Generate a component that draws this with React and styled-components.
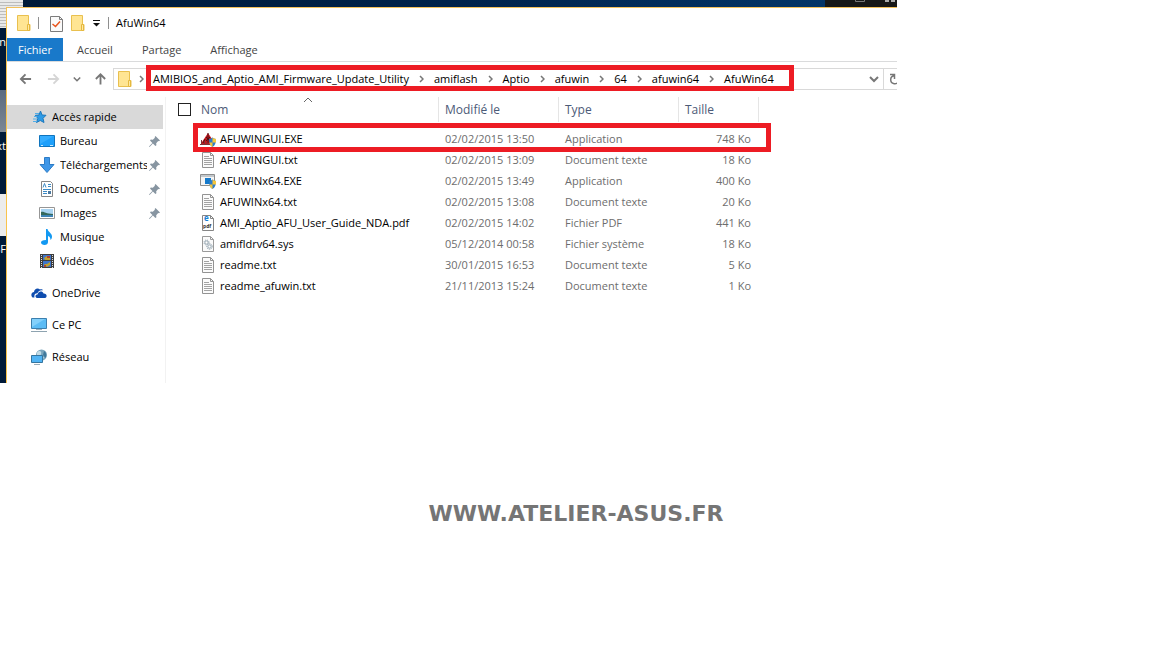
import React from "react";
import styled, { createGlobalStyle } from "styled-components";

const GlobalStyle = createGlobalStyle`
  * {
    box-sizing: border-box;
  }

  body {
    margin: 0;
    background: #fff;
    color: #000;
    font-family: "Open Sans", "Noto Sans", sans-serif;
    font-size: 11px;
    line-height: 16px;
  }

  button {
    padding: 0;
    border: 0;
    background: none;
    color: inherit;
    font: inherit;
  }

  a {
    color: inherit;
    text-decoration: none;
  }

  svg {
    display: block;
    flex: none;
  }
`;

const SDesktop = styled.div`
  position: relative;
  overflow: hidden;
  margin-right: 255px;
  padding: 7px 0 0 6px;
  background: linear-gradient(90deg, #001a38 0%, #00224a 50%, #04386c 100%);
`;

const SShortcut = styled.div`
  position: absolute;
  left: 0;
  top: ${props => props.$top}px;
  width: ${props => props.$width || 6}px;
  height: ${props => props.$height}px;
  background: ${props => props.$fill};
`;

const SShortcutName = styled.span`
  position: absolute;
  left: 0;
  top: ${props => props.$top}px;
  width: 6px;
  overflow: hidden;
  direction: rtl;
  color: #fff;
  white-space: nowrap;
`;

const SBackWindow = styled.div`
  position: absolute;
  top: 0;
  right: 0;
  width: 72px;
  height: 7px;
  background: #171717;

  > svg {
    position: absolute;
    top: 0;
    right: 0;
  }
`;

const SWindow = styled.div`
  position: relative;
  border-top: 1px solid #f3c15b;
  border-left: 1px solid #f9c34c;
  background: #fff;
`;

const STitleBar = styled.header`
  display: flex;
  align-items: center;
  height: 30px;
  padding-left: 10px;
`;

const SQuickAccess = styled.div`
  display: flex;
  align-items: center;
  gap: 7px;
  margin-right: 7px;
`;

const SQuickButtons = styled.div`
  display: flex;
  align-items: center;
  gap: 8px;
  padding-left: 4px;
`;

const SDivider = styled.span`
  width: 1px;
  height: 12px;
  background: #8f8f8f;
`;

const STitle = styled.h1`
  margin: 0;
  font-size: 11px;
  font-weight: 400;
`;

const STabs = styled.nav`
  display: flex;
  height: 24px;
  border-bottom: 1px solid #dadbdc;
`;

const STab = styled.button`
  padding: 0 ${props => (props.$active ? 11 : 14)}px;
  margin-right: ${props => (props.$active ? 0 : 1)}px;
  background: ${props => (props.$active ? "#1979ca" : "transparent")};
  color: ${props => (props.$active ? "#fff" : "#444")};
`;

const SNavBar = styled.div`
  display: flex;
  height: 35px;
  padding: 6px 0 7px 12px;
`;

const SNavButtons = styled.div`
  display: flex;
  align-items: center;
  gap: 13px;
  margin-right: 6px;
`;

const SForward = styled.button`
  margin-left: 2px;
`;

const SAddress = styled.div`
  display: flex;
  flex: 1;
  align-items: center;
  min-width: 0;
  padding-left: 4px;
  border: 1px solid #d9d9d9;
  border-right: 0;

  > button:nth-last-child(2) {
    margin-left: auto;
    padding-right: 4px;
  }
`;

const SRootCrumb = styled.div`
  display: flex;
  align-items: center;
  gap: 7px;
  margin-right: 2px;
`;

const SCrumbs = styled.ol`
  position: relative;
  display: flex;
  align-items: center;
  gap: 10px;
  height: 20px;
  margin: 0;
  padding: 0 20px 0 7px;
  list-style: none;
  white-space: nowrap;

  &::after {
    content: "";
    position: absolute;
    inset: -4px 0 -2px;
    border: 5px solid #ed1c24;
    pointer-events: none;
  }
`;

const SCrumb = styled.li`
  display: flex;
  align-items: center;
  gap: 10px;
`;

const SRefresh = styled.button`
  display: flex;
  align-items: center;
  width: 14px;
  height: 20px;
  padding-left: 5px;
  overflow: hidden;
  border-left: 1px solid #d9d9d9;
`;

const SBody = styled.div`
  display: flex;
`;

const SSidebar = styled.nav`
  width: 159px;
  padding: 8px 2px 14px 0;
  border-right: 1px solid #f2f2f2;
`;

const SPlace = styled.a`
  display: flex;
  align-items: center;
  gap: 5px;
  height: 24px;
  margin-top: ${props => (props.$root ? 8 : 0)}px;
  padding: 0 3px 0 ${props => (props.$nested ? 32 : 24)}px;
  background: ${props => (props.$active ? "#d9d9d9" : "transparent")};
`;

const SPlaceName = styled.span`
  flex: 1;
  overflow: hidden;
  white-space: nowrap;
`;

const SPin = styled.span`
  margin-left: -3px;
`;

const SFiles = styled.table`
  table-layout: fixed;
  width: 593px;
  height: min-content;
  border-collapse: collapse;
`;

const SHead = styled.th`
  position: relative;
  width: ${props => props.$width}px;
  padding: 0 0 6px;
  color: #4c5a77;
  font-size: 12px;
  font-weight: 400;
  text-align: left;

  > svg {
    position: absolute;
    top: 0;
    left: 105px;
  }
`;

const SHeadLabel = styled.div`
  height: 25px;
  padding-left: ${props => props.$indent || 6}px;
  border-right: 1px solid #e5e5e5;
  line-height: 25px;
`;

const SCheckbox = styled.input`
  display: block;
  width: 13px;
  height: 13px;
  margin: 6px 0 6px 12px;
  appearance: none;
  border: 1px solid #222;
  background: #fff;
`;

const SRow = styled.tr`
  position: relative;
  height: 21px;
`;

const SCell = styled.td`
  padding: 0 8px 0 6px;
  color: #6d6d6d;
  text-align: ${props => (props.$right ? "right" : "left")};
  white-space: nowrap;
`;

const SNameCell = styled.td`
  padding: 0 0 0 2px;
  white-space: nowrap;

  &::after {
    content: "";
    display: ${props => (props.$marked ? "block" : "none")};
    position: absolute;
    inset: -5px -12px -3px 27px;
    border: 5px solid #ed1c24;
    pointer-events: none;
  }
`;

const SFileName = styled.div`
  display: flex;
  align-items: center;
  gap: 4px;
`;

const SFooter = styled.footer`
  padding: 116px 0 100px;
  color: #757575;
  font-family: "DejaVu Sans", sans-serif;
  font-size: 22px;
  font-weight: 700;
  line-height: 30px;
  text-align: center;
`;

const Folder = () => (
  <svg width="14" height="17" viewBox="0 0 14 17">
    <path d="M.5.5h11v9h1.500v6H.5z" fill="#ffe38c" stroke="#e9c04f" />
    <path d="M1 1h10v14H1z" fill="#ffe593" />
    <path d="M10.500 9.500h2v6h-2z" fill="#ffe9a6" stroke="#e5b93e" />
  </svg>
);

const Properties = () => (
  <svg width="13" height="17" viewBox="0 0 13 17">
    <path d="M.5 1.500h9l3 3v12H.5z" fill="#fafafa" stroke="#7c7c7c" />
    <path d="M9.500 1.500v3h3" fill="none" stroke="#7c7c7c" />
    <path d="M2.500 9l3 2.500 4.500-5" fill="none" stroke="#e8541c" strokeWidth="1.500" />
  </svg>
);

const Customize = () => (
  <svg width="8" height="8" viewBox="0 0 8 8">
    <path d="M0 1.500h7" stroke="#111" />
    <path d="M0 4h7L3.500 7.500z" fill="#111" />
  </svg>
);

const Arrow = ({ turn = 0, color = "#777" }) => (
  <svg width="13" height="14" viewBox="0 0 14 14">
    <path
      d="M13 7H2M7 2L2 7l5 5"
      fill="none"
      stroke={color}
      strokeWidth="2"
      transform={`rotate(${turn} 7 7)`}
    />
  </svg>
);

const ChevronRight = () => (
  <svg width="5" height="8" viewBox="0 0 5 8">
    <path d="M1 1l3 3-3 3" fill="none" stroke="#777" strokeWidth="1.500" />
  </svg>
);

const ChevronDown = ({ width = 10 }) => (
  <svg width={width} height="7" viewBox="0 0 10 7">
    <path d="M1 1l4 4 4-4" fill="none" stroke="#777" strokeWidth="2" />
  </svg>
);

const SortUp = () => (
  <svg width="10" height="6" viewBox="0 0 10 6">
    <path d="M1 5l4-4 4 4" fill="none" stroke="#666" />
  </svg>
);

const Refresh = () => (
  <svg width="12" height="12" viewBox="0 0 12 12">
    <path d="M5 2.800A4 4 0 1 0 9.500 8M1 1.500h4.500V6" fill="none" stroke="#777" strokeWidth="1.500" />
  </svg>
);

const CaptionIcons = () => (
  <svg width="45" height="7" viewBox="0 0 45 7">
    <path d="M3.500 0v1.500h9V0" fill="none" stroke="#777" />
    <path d="M33 0h4v2h-4zM39 0h4v2h-4z" fill="#aaa" />
  </svg>
);

const Pin = () => (
  <svg width="11" height="11" viewBox="0 0 11 11">
    <path
      d="M6.500 0L11 4.500l-1 .8-.8-.2L7.200 7.200l.2 2-1 .8-2.500-2.400L.6 11 0 10.400l3.400-3.300L1 4.600l.8-1 2 .2 2.100-2-.2-.8z"
      fill="#8795a1"
    />
  </svg>
);

const placeIcons = {
  quick: (
    <>
      <path d="M9.500 2l1.500 4 4 .3-3 3 1 4.200-3.700-2-3.800 2 1.300-4.200-2.500-3L8 6z" fill="#2e9be6" stroke="#1c78bd" />
      <path d="M4 4.500h4M3 7.500h3M2 12.500h4M2 10h4" stroke="#51aee9" />
    </>
  ),
  desktop: (
    <>
      <path d="M.5 2.500h15v11H.5z" fill="#1ea0fb" stroke="#1074bd" />
      <path d="M1 3h14L1 11z" fill="#35adff" />
      <path d="M2 12.500h2M11 12.500h3" stroke="#c9ebff" />
    </>
  ),
  downloads: (
    <path d="M5.500.5h5v7h4.500L8 15.500 1 7.500h4.500z" fill="#3f97e8" stroke="#2c7cc6" />
  ),
  documents: (
    <>
      <path d="M2.500.5h9l2 2v13h-11z" fill="#fff" stroke="#858585" />
      <path d="M4 6.500l1.500-4 1.500 4M9 3.500h3M9 5.500h3M4 8.500h8M4 12.500h4M4 10.500h4" fill="none" stroke="#3b8ac6" />
      <path d="M9 10h3v3H9z" fill="#4b79a0" />
    </>
  ),
  pictures: (
    <>
      <path d="M.5 2.500h15v11H.5z" fill="#fff" stroke="#969696" />
      <path d="M2 4h12v8H2z" fill="#a8d3f1" />
      <path d="M2 7c3-1 4 2 12 2v1H2z" fill="#34685b" />
      <path d="M2 10h12v2H2z" fill="#3d83b5" />
    </>
  ),
  music: (
    <path
      d="M7 0h1.500c.5 3 4.500 4 4.500 7.500 0 1.500-.5 2.500-1.500 3.500 0-2.500-1-3.500-2.500-4v6c0 2-1.500 3-3.500 3S2 15 2 13.500 3.500 11 7 11z"
      fill="#1399f2"
    />
  ),
  videos: (
    <>
      <path d="M1 1h14v14H1z" fill="#3d3d3d" />
      <path d="M2.500 2v13M13.500 2v13" stroke="#ddd" strokeDasharray="1 1" />
      <path d="M4 2h8v5H4zM4 8h8v6H4z" fill="#3f75ca" />
      <path d="M5 5l3-2 3 2v2H6zM5 11h3l3-2v3l-3 2z" fill="#c1a12f" />
      <path d="M8 3h3v2H8zM5 12h2v2H5z" fill="#b3402e" />
    </>
  ),
  onedrive: (
    <>
      <path d="M1.500 12.500C-1 10 1 7 3 7c.3-3 3.500-4.500 6-2.500.8-.5 2.500-.5 3 .8-3.500-.5-5 1-5.500 3-3 0-3.500 2-3 4.200z" fill="#0e4cae" />
      <path d="M6 13c-2.300-.7-2-3.500.8-3.800C7.200 6 11.500 5.500 12.500 8.500c3-.3 4.500 3.500 1.500 4.500z" fill="#0e4cae" />
    </>
  ),
  computer: (
    <>
      <path d="M.5 1.500h15v10H.5z" fill="#5cbcf5" stroke="#3c7fae" />
      <path d="M1 2h13L1 10z" fill="#83d0fb" />
      <path d="M5 12.500h6" stroke="#9eb1bd" />
      <path d="M0 14.500h16" stroke="#8ea3b0" />
    </>
  ),
  network: (
    <>
      <circle cx="10.500" cy="6" r="5.500" fill="#7aa5bd" />
      <path d="M6 3.500C9 .5 11 3 10 5s2 2 3 4c-4 2-6 0-7-2z" fill="#c2dbe5" />
      <path d="M13 2c2 1 3 4 1.500 7L12 6z" fill="#3f789b" />
      <path d="M.5 6.500h11v7H.5z" fill="#51b4f4" stroke="#35759f" />
      <path d="M3 15.500h6" stroke="#9aacb7" />
    </>
  )
};

const Shield = () => (
  <>
    <path d="M9 8c1.500 0 2.500-.8 3.500-1.500C13.500 7.200 14.500 8 16 8c0 4-1 6.500-3.500 8C10 14.500 9 12 9 8z" fill="#2e7cc8" />
    <path d="M12.500 6.500c1 .7 2 1.500 3.500 1.500v3.500h-3.500zM9.400 11.500h3.100V16c-1.700-1-2.700-2.500-3.100-4.500z" fill="#f5c63b" />
  </>
);

const fileIcons = {
  gui: (
    <>
      <path d="M8 2l6 9v2H2v-2z" fill="#c5161d" />
      <path d="M8 2v10M6 6l4 4M10 6l-4 4M3 12l2-4" fill="none" stroke="#4f1517" />
      <path d="M0 13.500h10M1.500 9v4M4.500 10v4M7 11v3" stroke="#7d3236" />
      <Shield />
    </>
  ),
  exe: (
    <>
      <path d="M.5 1.500h14v11H.5z" fill="#f4f4f4" stroke="#8d8d8d" />
      <path d="M1 2h13v2H1z" fill="#c2c7cb" />
      <path d="M5 5h6v6H5z" fill="#1479cb" />
      <Shield />
    </>
  ),
  txt: (
    <>
      <path d="M2.500.5h8l3 3v12h-11z" fill="#fbfbfb" stroke="#939393" />
      <path d="M10.500.5v3h3" fill="none" stroke="#939393" />
      <path d="M4 4.500h5M4 6.500h8M4 8.500h8M4 10.500h8M4 12.500h8" stroke="#a3a3a3" />
    </>
  ),
  pdf: (
    <>
      <path d="M2.500.5h8l3 3v12h-11z" fill="#fff" stroke="#858585" />
      <path d="M10.500.5v3h3" fill="none" stroke="#858585" />
      <text x="4" y="6" fill="#1580d4" fontSize="8" fontWeight="700">e</text>
      <text x="3" y="13" fill="#333" fontSize="5" fontWeight="700">pdf</text>
    </>
  ),
  sys: (
    <>
      <path d="M2.500.5h8l3 3v12h-11z" fill="#fbfbfb" stroke="#9a9a9a" />
      <path d="M10.500.5v3h3" fill="none" stroke="#9a9a9a" />
      <circle cx="6.500" cy="6.500" r="2.500" fill="#dfe5e9" stroke="#93a3ad" strokeDasharray="1 1" />
      <circle cx="9.500" cy="10.500" r="2.800" fill="#dfe5e9" stroke="#93a3ad" strokeDasharray="1 1" />
      <circle cx="6.500" cy="6.500" r="1.500" fill="#fff" stroke="#a5b2bb" />
      <circle cx="9.500" cy="10.500" r="1.500" fill="#fff" stroke="#a5b2bb" />
    </>
  )
};

const Icon = ({ children }) => (
  <svg width="16" height="16" viewBox="0 0 16 16">
    {children}
  </svg>
);

const tabs = ["Fichier", "Accueil", "Partage", "Affichage"];

const path = [
  "AMIBIOS_and_Aptio_AMI_Firmware_Update_Utility",
  "amiflash",
  "Aptio",
  "afuwin",
  "64",
  "afuwin64",
  "AfuWin64"
];

const places = [
  { name: "Accès rapide", icon: "quick", active: true },
  { name: "Bureau", icon: "desktop", nested: true, pinned: true },
  { name: "Téléchargements", icon: "downloads", nested: true, pinned: true },
  { name: "Documents", icon: "documents", nested: true, pinned: true },
  { name: "Images", icon: "pictures", nested: true, pinned: true },
  { name: "Musique", icon: "music", nested: true },
  { name: "Vidéos", icon: "videos", nested: true },
  { name: "OneDrive", icon: "onedrive", root: true },
  { name: "Ce PC", icon: "computer", root: true },
  { name: "Réseau", icon: "network", root: true }
];

const files = [
  { name: "AFUWINGUI.EXE", date: "02/02/2015 13:50", type: "Application", size: "748 Ko", icon: "gui", marked: true },
  { name: "AFUWINGUI.txt", date: "02/02/2015 13:09", type: "Document texte", size: "18 Ko", icon: "txt" },
  { name: "AFUWINx64.EXE", date: "02/02/2015 13:49", type: "Application", size: "400 Ko", icon: "exe" },
  { name: "AFUWINx64.txt", date: "02/02/2015 13:08", type: "Document texte", size: "20 Ko", icon: "txt" },
  { name: "AMI_Aptio_AFU_User_Guide_NDA.pdf", date: "02/02/2015 14:02", type: "Fichier PDF", size: "441 Ko", icon: "pdf" },
  { name: "amifldrv64.sys", date: "05/12/2014 00:58", type: "Fichier système", size: "18 Ko", icon: "sys" },
  { name: "readme.txt", date: "30/01/2015 16:53", type: "Document texte", size: "5 Ko", icon: "txt" },
  { name: "readme_afuwin.txt", date: "21/11/2013 15:24", type: "Document texte", size: "1 Ko", icon: "txt" }
];

const Place = ({ place }) => (
  <SPlace href="#" $active={place.active} $nested={place.nested} $root={place.root}>
    <Icon>{placeIcons[place.icon]}</Icon>
    <SPlaceName>{place.name}</SPlaceName>
    {place.pinned && (
      <SPin>
        <Pin />
      </SPin>
    )}
  </SPlace>
);

const TitleBar = () => (
  <STitleBar>
    <SQuickAccess>
      <Folder />
      <SDivider />
      <SQuickButtons>
        <button aria-label="Propriétés">
          <Properties />
        </button>
        <button aria-label="Nouveau dossier">
          <Folder />
        </button>
        <button aria-label="Personnaliser">
          <Customize />
        </button>
      </SQuickButtons>
      <SDivider />
    </SQuickAccess>
    <STitle>AfuWin64</STitle>
  </STitleBar>
);

const NavBar = () => (
  <SNavBar>
    <SNavButtons>
      <button aria-label="Précédent">
        <Arrow />
      </button>
      <SForward aria-label="Suivant">
        <Arrow turn={180} color="#d5d5d5" />
      </SForward>
      <button aria-label="Emplacements récents">
        <ChevronDown width={8} />
      </button>
      <button aria-label="Dossier parent">
        <Arrow turn={90} />
      </button>
    </SNavButtons>
    <SAddress>
      <SRootCrumb>
        <Folder />
        <ChevronRight />
      </SRootCrumb>
      <SCrumbs>
        {path.map((name, index) => (
          <SCrumb key={name}>
            {index > 0 && <ChevronRight />}
            <a href="#">{name}</a>
          </SCrumb>
        ))}
      </SCrumbs>
      <button aria-label="Historique">
        <ChevronDown />
      </button>
      <SRefresh aria-label="Actualiser">
        <Refresh />
      </SRefresh>
    </SAddress>
  </SNavBar>
);

const FileRow = ({ file }) => (
  <SRow>
    <td />
    <SNameCell $marked={file.marked}>
      <SFileName>
        <Icon>{fileIcons[file.icon]}</Icon>
        {file.name}
      </SFileName>
    </SNameCell>
    <SCell>{file.date}</SCell>
    <SCell>{file.type}</SCell>
    <SCell $right>{file.size}</SCell>
  </SRow>
);

const FileTable = () => (
  <SFiles>
    <thead>
      <tr>
        <SHead $width={32}>
          <SCheckbox type="checkbox" aria-label="Tout sélectionner" />
        </SHead>
        <SHead $width={241}>
          <SHeadLabel $indent={3}>Nom</SHeadLabel>
          <SortUp />
        </SHead>
        <SHead $width={120}>
          <SHeadLabel>Modifié le</SHeadLabel>
        </SHead>
        <SHead $width={120}>
          <SHeadLabel>Type</SHeadLabel>
        </SHead>
        <SHead $width={80}>
          <SHeadLabel>Taille</SHeadLabel>
        </SHead>
      </tr>
    </thead>
    <tbody>
      {files.map(file => (
        <FileRow file={file} key={file.name} />
      ))}
    </tbody>
  </SFiles>
);

const App = () => (
  <>
    <GlobalStyle />
    <SDesktop>
      <SShortcut $top={0} $width={23} $height={28} $fill="repeating-linear-gradient(#e9e9e9 0 2px, #bdbdbd 2px 3px)" />
      <SShortcutName $top={34}>nn</SShortcutName>
      <SShortcut $top={90} $height={42} $fill="linear-gradient(#5b6b80, #7c8794)" />
      <SShortcutName $top={138}>xt</SShortcutName>
      <SShortcut $top={194} $height={42} $fill="#ececec" />
      <SShortcutName $top={241}>BF</SShortcutName>
      <SBackWindow>
        <CaptionIcons />
      </SBackWindow>
      <SWindow>
        <TitleBar />
        <STabs>
          {tabs.map((tab, index) => (
            <STab key={tab} $active={index === 0}>
              {tab}
            </STab>
          ))}
        </STabs>
        <NavBar />
        <SBody>
          <SSidebar>
            {places.map(place => (
              <Place place={place} key={place.name} />
            ))}
          </SSidebar>
          <FileTable />
        </SBody>
      </SWindow>
    </SDesktop>
    <SFooter>WWW.ATELIER-ASUS.FR</SFooter>
  </>
);

export default App;
